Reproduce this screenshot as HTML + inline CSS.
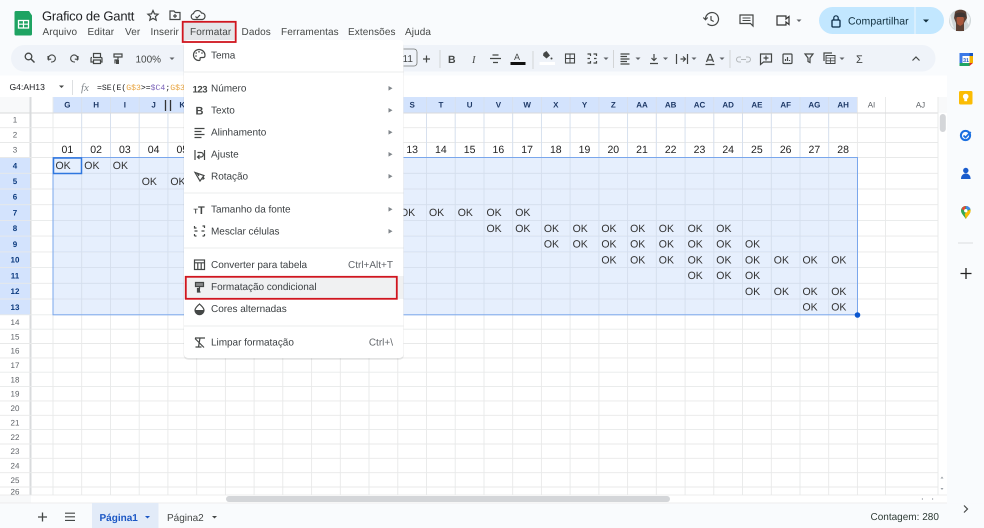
<!DOCTYPE html>
<html lang="pt"><head><meta charset="utf-8"><title>Grafico de Gantt</title>
<style>
html,body{margin:0;padding:0;width:984px;height:528px;overflow:hidden;background:#f9fbfd}
svg{display:block;font-family:"Liberation Sans",Arial,sans-serif;text-rendering:geometricPrecision}
.m{font-size:10px;fill:#3c4043;letter-spacing:-.03px}
.sc{font-size:10px;fill:#5f6368}
.c{font-size:10.5px;fill:#333}
.n{font-size:10.5px;fill:#222;text-anchor:middle}
.r{font-size:8px;fill:#5f6368;text-anchor:middle}
.rs{font-size:8px;fill:#0b3a7e;font-weight:bold;text-anchor:middle}
.h{font-size:8px;fill:#1f3a68;font-weight:bold;text-anchor:middle}
.hu{font-size:8px;fill:#5f6368;text-anchor:middle}
.i{fill:none;stroke:#444746;stroke-width:1.2}
.a{fill:#5f6368}
</style></head><body>
<svg width="984" height="528" viewBox="0 0 984 528" xmlns="http://www.w3.org/2000/svg">
<rect width="984" height="528" fill="#f9fbfd"/>

<!-- Logo -->
<path d="M16 11h13l3 4.500V34a1.500 1.500 0 0 1-1.500 1.500H16A1.500 1.500 0 0 1 14.500 34V12.500A1.500 1.500 0 0 1 16 11z" fill="#1ea362"/>
<rect x="18.500" y="20.500" width="10" height="7.500" fill="none" stroke="#fff" stroke-width="1.300"/>
<path d="M18.500 24.200h10M23.500 20.500v7.500" stroke="#fff" stroke-width="1.200"/>

<!-- Title -->
<text x="42" y="20.500" font-size="13" fill="#202124" letter-spacing="-.2">Grafico de Gantt</text>
<path d="M153 10.500l1.500 3.400 3.600.3-2.700 2.400.8 3.600-3.200-1.900-3.200 1.900.8-3.600-2.700-2.400 3.600-.3z" class="i" stroke-width="1.100"/>
<path d="M170 11h4l1.300 1.500h4.700v7h-10z" class="i"/><path d="M175 14v4M173 16h4" class="i" stroke-width=".9"/>
<path d="M194 19.500a3 3 0 0 1-.5-5.900 4.300 4.300 0 0 1 8-.6 3.300 3.300 0 0 1 1 6.500z" class="i"/><path d="M195.500 16.500l1.500 1.500 3-3" class="i" stroke-width=".9"/>

<!-- Menubar -->
<g font-size="10" fill="#444746" letter-spacing=".1">
<text x="42.500" y="35">Arquivo</text>
<text x="87.500" y="35">Editar</text>
<text x="125" y="35">Ver</text>
<text x="150.500" y="35">Inserir</text>
<rect x="183" y="22" width="52.500" height="20" fill="#e4e6e9"/>
<text x="190" y="35">Formatar</text>
<text x="241.500" y="35">Dados</text>
<text x="281" y="35">Ferramentas</text>
<text x="348" y="35">Extensões</text>
<text x="405" y="35">Ajuda</text>
</g>

<!-- Top-right controls -->
<g class="i" stroke-width="1.400">
<g transform="translate(3.500 0)"><path d="M702 19a6.500 6.500 0 1 1 2 4.700"/><path d="M699.800 17.500l2.200 2.300 2.200-2.300" stroke-width="1.200"/><path d="M707.500 16v4l2.700 1.500" stroke-width="1.200"/></g>
<g transform="translate(6 0)"><path d="M734 15h13v11l-2.500-2.500H734z"/><path d="M736.500 18h8M736.500 20.500h8" stroke-width="1"/></g>
<path d="M777 16h9v3l3-2.500v8l-3-2.500v3h-9z" stroke="#333"/>
</g>
<path d="M796.500 19.500h5l-2.500 2.500z" class="a"/>
<rect x="819" y="7" width="125" height="27" rx="13.500" fill="#c2e7ff"/>
<path d="M915 7v27" stroke="#f9fbfd" stroke-width=".8"/>
<rect x="832" y="20" width="8" height="7" rx="1" fill="none" stroke="#0a2b46" stroke-width="1.300"/>
<path d="M833.800 20v-2a2.200 2.200 0 0 1 4.400 0v2" fill="none" stroke="#0a2b46" stroke-width="1.200"/>
<text x="848" y="24.300" font-size="10.500" fill="#12303f" letter-spacing=".05">Compartilhar</text>
<path d="M923 19.500h6l-3 3z" fill="#12303f"/>

<!-- Avatar -->
<g transform="translate(-6 0)">
<circle cx="966" cy="20.500" r="11" fill="#cfd6d8"/>
<path d="M961 12c2-3 9-3 11 0l1 6-3 5v8h-8v-8l-2-5z" fill="#5b4034"/>
<path d="M962.500 19c.5-4 7-4 7.500 0l-.8 5-3 2-3-2z" fill="#a8573c"/>
<path d="M961 14c3-2 8-2 10.500 0l.5 3-11 0z" fill="#3f3532"/>
<path d="M956 15c1.500 3 2 9 4 13l-2-1c-2-3-3-8-2-12zM973 13l3 5-1 7-2-3z" fill="#f0f2f2"/>
</g>

<!-- Toolbar pill -->
<rect x="11" y="45" width="924.500" height="26.500" rx="13.250" fill="#eff3f9"/>
<g class="i">
<circle cx="28.500" cy="56.500" r="3.300" stroke-width="1.300"/><path d="M31 59l3.500 3.500" stroke-width="1.400"/>
<path d="M49 60.500a3.500 3.500 0 1 1 3 1.500h-1M48 56v3.200h3.200" stroke-width="1.100"/>
<path d="M77 60.500a3.500 3.500 0 1 0-3 1.500h1M78 56v3.200h-3.200" stroke-width="1.100"/>
<path d="M93 57.500h8a1 1 0 0 1 1 1v3.500h-2M93 62h-2v-3.500a1 1 0 0 1 1-1M93.500 57v-3.500h7V57M93.500 60h7v3.500h-7z" stroke-width="1.200"/>
<path d="M114 54h8v3h-8zM118 57.500v2.500h-3v3.500" stroke-width="1.200"/>
<rect x="116" y="60" width="3" height="4" fill="#444746" stroke="none"/>
</g>
<text x="135.500" y="62.500" font-size="10" fill="#444746">100%</text>
<path d="M169.500 57.500h5l-2.500 2.500z" class="a"/>

<!-- right side of toolbar -->
<rect x="392" y="49" width="25" height="17" rx="3" fill="none" stroke="#747775" stroke-width=".8"/>
<text x="402.500" y="62" font-size="10" fill="#444746">11</text>
<path d="M423 59h7M426.500 55.500v7" class="i" stroke-width="1.100"/>
<path d="M440 50v18" stroke="#c7c7c7" stroke-width=".7"/>
<text x="448" y="63" font-size="10.500" font-weight="bold" fill="#444746">B</text>
<text x="472" y="63" font-size="10.500" font-style="italic" fill="#444746" font-family="Liberation Serif">I</text>
<path d="M490 58.500h11M492.500 55h6M493 62.500h5" class="i" stroke-width="1"/>
<text x="514" y="60" font-size="9" fill="#444746">A</text>
<rect x="510.500" y="62" width="15" height="3" fill="#111"/>
<path d="M533 51v18" stroke="#c7c7c7" stroke-width=".7"/>
<g transform="translate(2.500 0)"><path d="M541 53l3-2 3.500 4.500-3.500 3-3.500-3z" fill="#444746"/><circle cx="549" cy="58.500" r="1" fill="#444746"/>
<rect x="537" y="62" width="15.500" height="3" fill="#fff"/></g>
<g transform="translate(3 0)"><rect x="562.500" y="54" width="9" height="9" fill="none" stroke="#444746" stroke-width="1.100"/><path d="M562.500 58.500h9M567 54v9" stroke="#444746" stroke-width="1"/></g>
<g transform="translate(3.500 0)"><path d="M584 54h3v2M590 54h3v2M584 63h3v-2M590 63h3v-2M584 58.500h2.500M590.500 58.500h2.500" class="i" stroke-width="1.100"/></g>
<path d="M603.500 57.500h5l-2.500 2.500z" class="a"/>
<path d="M613.500 50v18" stroke="#c7c7c7" stroke-width=".7"/>
<path d="M620.500 54h9M620.500 56.500h6.500M620.500 59h9M620.500 61.500h6.500M620.500 64h9" class="i" stroke-width="1"/>
<path d="M635.500 57.500h5l-2.500 2.500z" class="a"/>
<g transform="translate(5 0)"><path d="M649 54v6M646.500 58l2.500 2.500 2.500-2.500M645 63.500h8" class="i" stroke-width="1.100"/></g>
<path d="M663 57.500h5l-2.500 2.500z" class="a"/>
<g transform="translate(3.500 0)"><path d="M673 54v10M677 59h5M679.500 56.500l2.500 2.500-2.500 2.500M684 54v10" class="i" stroke-width="1"/></g>
<path d="M691.500 57.500h5l-2.500 2.500z" class="a"/>
<g transform="translate(6 0)"><path d="M700.500 62l3-7.500h1l3 7.500M701.500 60h5M699.500 64.500h9" class="i" stroke-width="1"/></g>
<path d="M719.500 57.500h5l-2.500 2.500z" class="a"/>
<path d="M730 50v18" stroke="#c7c7c7" stroke-width=".7"/>
<g transform="translate(4 0)"><path d="M737 57h-2a2.500 2.500 0 0 0 0 5h2M742 57h2a2.500 2.500 0 0 1 0 5h-2M737 59.500h5" fill="none" stroke="#b4b8bb" stroke-width="1"/></g>
<g transform="translate(6.500 0)"><path d="M754 54h11v8h-8l-3 2.500z" class="i" stroke-width="1.200"/><path d="M759.500 55.500v5M757 58h5" class="i" stroke-width="1"/></g>
<g transform="translate(7 0)"><rect x="776" y="54" width="9" height="9.500" rx="1" class="i" stroke-width="1.100"/><path d="M778.500 61v-2M780.500 61v-4M782.500 61v-1" class="i" stroke-width="1"/></g>
<g transform="translate(7 0)"><path d="M798 54h8l-3 4v4.500l-2-1V58z" class="i" stroke-width="1.100"/></g>
<g transform="translate(9 0)"><rect x="817" y="55.500" width="9" height="8" fill="none" stroke="#444746" stroke-width="1"/><path d="M817 58h9M817 60.800h9M821.500 58v5.500" stroke="#444746" stroke-width=".8"/><path d="M815 61v-8h8" class="i" stroke-width="1"/></g>
<path d="M839.500 57.500h5l-2.500 2.500z" class="a"/>
<text x="856" y="63" font-size="11" fill="#444746">Σ</text>
<path d="M912.500 60.500l3.500-3.500 3.500 3.500" class="i" stroke-width="1.100"/>

<!-- Formula bar -->
<rect x="0" y="75.500" width="947" height="21.500" fill="#fff"/>
<text x="9.500" y="90" font-size="8.600" fill="#202124">G4:AH13</text>
<path d="M59 85.500h5l-2.500 2.500z" fill="#444746"/>
<path d="M72.500 80v15" stroke="#d5d7da" stroke-width=".8"/>
<text x="81" y="91" font-size="11" font-style="italic" fill="#80868b" font-family="Liberation Serif">fx</text>
<text x="97" y="90" font-size="8.150" font-family="Liberation Mono" fill="#202124">=SE(E(<tspan fill="#e8a33d">G$3</tspan>&gt;=<tspan fill="#7a62b8">$C4</tspan>;<tspan fill="#e8a33d">G$3</tspan></text>

<!-- Sheet area -->
<rect x="0" y="97" width="947" height="398" fill="#fff"/>
<rect x="0" y="97" width="30" height="16" fill="#f8f9fa"/>
<rect x="938" y="97" width="9" height="16" fill="#f8f9fa"/>
<rect x="29.500" y="97" width="2" height="398" fill="#d9dbdd"/>
<rect x="53" y="97" width="804.500" height="16" fill="#d3e3fd"/>
<rect x="0" y="157.500" width="30" height="157.300" fill="#d3e3fd"/>
<rect x="53" y="157.500" width="804.500" height="157.300" fill="#e6effd"/>

<!-- Grid lines -->
<path fill="none" stroke="#e8e9e9" stroke-width=".9" d="M0 113H938M0 127.700H938M0 142.500H938M0 157.500H938M0 173.300H938M0 189H938M0 204.700H938M0 220.400H938M0 236.100H938M0 251.900H938M0 267.600H938M0 283.300H938M0 299H938M0 314.800H938M0 329.200H938M0 343.500H938M0 357.900H938M0 372.200H938M0 386.600H938M0 400.900H938M0 415.300H938M0 429.600H938M0 444H938M0 458.300H938M0 472.700H938M0 487H938"/>
<path fill="none" stroke="#e8e9e9" stroke-width=".9" d="M53 97V495M81.700 97V495M110.500 97V495M139.200 97V495M167.900 97V495M196.700 97V495M225.400 97V495M254.100 97V495M282.800 97V495M311.600 97V495M340.300 97V495M369 97V495M397.800 97V495M426.500 97V495M455.200 97V495M484 97V495M512.700 97V495M541.400 97V495M570.100 97V495M598.900 97V495M627.600 97V495M656.300 97V495M685.100 97V495M713.800 97V495M742.500 97V495M771.300 97V495M800 97V495M828.700 97V495M857.400 97V495M885.500 97V495"/>
<path fill="none" stroke="#d3deef" stroke-width=".8" d="M53 173.300H857M53 189H857M53 204.700H857M53 220.400H857M53 236.100H857M53 251.900H857M53 267.600H857M53 283.300H857M53 299H857M81.700 97V315M110.500 97V315M139.200 97V315M167.900 97V315M196.700 97V315M225.400 97V315M254.100 97V315M282.800 97V315M311.600 97V315M340.300 97V315M369 97V315M397.800 97V315M426.500 97V315M455.200 97V315M484 97V315M512.700 97V315M541.400 97V315M570.100 97V315M598.900 97V315M627.600 97V315M656.300 97V315M685.100 97V315M713.800 97V315M742.500 97V315M771.300 97V315M800 97V315M828.700 97V315"/>
<path d="M0 113H938" stroke="#d8dadb" stroke-width="1.100"/>
<path d="M938 97V495" stroke="#e8e9e9" stroke-width=".9"/>
<rect x="939.800" y="114" width="6" height="18" rx="3" fill="#d4d6d9"/>

<!-- Column headers -->
<text class="h" x="67.400" y="107.500">G</text><text class="h" x="96.100" y="107.500">H</text><text class="h" x="124.900" y="107.500">I</text><text class="h" x="153.600" y="107.500">J</text><text class="h" x="182.300" y="107.500">K</text>
<path d="M165.500 100v11M170.500 100v11" stroke="#333" stroke-width="1.300"/>
<text class="h" x="412.200" y="107.500">S</text><text class="h" x="440.900" y="107.500">T</text><text class="h" x="469.600" y="107.500">U</text><text class="h" x="498.400" y="107.500">V</text><text class="h" x="527.100" y="107.500">W</text><text class="h" x="555.800" y="107.500">X</text><text class="h" x="584.500" y="107.500">Y</text><text class="h" x="613.300" y="107.500">Z</text><text class="h" x="642" y="107.500">AA</text><text class="h" x="670.700" y="107.500">AB</text><text class="h" x="699.500" y="107.500">AC</text><text class="h" x="728.200" y="107.500">AD</text><text class="h" x="756.900" y="107.500">AE</text><text class="h" x="785.700" y="107.500">AF</text><text class="h" x="814.400" y="107.500">AG</text><text class="h" x="843.100" y="107.500">AH</text>
<text class="hu" x="871.500" y="107.500">AI</text><text class="hu" x="920.500" y="107.500">AJ</text>

<!-- Row headers -->
<text class="r" x="15" y="122.500">1</text><text class="r" x="15" y="137.500">2</text><text class="r" x="15" y="152.500">3</text>
<text class="rs" x="15" y="168.300">4</text><text class="rs" x="15" y="184">5</text><text class="rs" x="15" y="199.700">6</text><text class="rs" x="15" y="215.400">7</text><text class="rs" x="15" y="231.100">8</text><text class="rs" x="15" y="246.900">9</text><text class="rs" x="15" y="262.600">10</text><text class="rs" x="15" y="278.300">11</text><text class="rs" x="15" y="294">12</text><text class="rs" x="15" y="309.800">13</text>
<text class="r" x="15" y="325">14</text><text class="r" x="15" y="339.300">15</text><text class="r" x="15" y="353.700">16</text><text class="r" x="15" y="368">17</text><text class="r" x="15" y="382.400">18</text><text class="r" x="15" y="396.700">19</text><text class="r" x="15" y="411.100">20</text><text class="r" x="15" y="425.400">21</text><text class="r" x="15" y="439.800">22</text><text class="r" x="15" y="454.100">23</text><text class="r" x="15" y="468.500">24</text><text class="r" x="15" y="482.800">25</text><text class="r" x="15" y="494.500">26</text>

<!-- Row 3 numbers -->
<text class="n" x="67.400" y="153">01</text><text class="n" x="96.100" y="153">02</text><text class="n" x="124.900" y="153">03</text><text class="n" x="153.600" y="153">04</text><text class="n" x="182.300" y="153">05</text><text class="n" x="412.200" y="153">13</text><text class="n" x="440.900" y="153">14</text><text class="n" x="469.600" y="153">15</text><text class="n" x="498.400" y="153">16</text><text class="n" x="527.100" y="153">17</text><text class="n" x="555.800" y="153">18</text><text class="n" x="584.500" y="153">19</text><text class="n" x="613.300" y="153">20</text><text class="n" x="642" y="153">21</text><text class="n" x="670.700" y="153">22</text><text class="n" x="699.500" y="153">23</text><text class="n" x="728.200" y="153">24</text><text class="n" x="756.900" y="153">25</text><text class="n" x="785.700" y="153">26</text><text class="n" x="814.400" y="153">27</text><text class="n" x="843.100" y="153">28</text>

<!-- OK cells -->
<text class="c" x="55.500" y="169">OK</text><text class="c" x="84.300" y="169">OK</text><text class="c" x="112.800" y="169">OK</text>
<text class="c" x="141.700" y="185">OK</text><text class="c" x="170.400" y="185">OK</text>
<text class="c" x="400" y="216">OK</text><text class="c" x="429" y="216">OK</text><text class="c" x="457.700" y="216">OK</text><text class="c" x="486.500" y="216">OK</text><text class="c" x="515.200" y="216">OK</text>
<text class="c" x="486.500" y="232">OK</text><text class="c" x="515.200" y="232">OK</text><text class="c" x="543.900" y="232">OK</text><text class="c" x="572.600" y="232">OK</text><text class="c" x="601.400" y="232">OK</text><text class="c" x="630.100" y="232">OK</text><text class="c" x="658.800" y="232">OK</text><text class="c" x="687.600" y="232">OK</text><text class="c" x="716.300" y="232">OK</text>
<text class="c" x="543.900" y="247.500">OK</text><text class="c" x="572.600" y="247.500">OK</text><text class="c" x="601.400" y="247.500">OK</text><text class="c" x="630.100" y="247.500">OK</text><text class="c" x="658.800" y="247.500">OK</text><text class="c" x="687.600" y="247.500">OK</text><text class="c" x="716.300" y="247.500">OK</text><text class="c" x="745" y="247.500">OK</text>
<text class="c" x="601.400" y="263.300">OK</text><text class="c" x="630.100" y="263.300">OK</text><text class="c" x="658.800" y="263.300">OK</text><text class="c" x="687.600" y="263.300">OK</text><text class="c" x="716.300" y="263.300">OK</text><text class="c" x="745" y="263.300">OK</text><text class="c" x="773.800" y="263.300">OK</text><text class="c" x="802.500" y="263.300">OK</text><text class="c" x="831.200" y="263.300">OK</text>
<text class="c" x="687.600" y="279">OK</text><text class="c" x="716.300" y="279">OK</text><text class="c" x="745" y="279">OK</text>
<text class="c" x="745" y="295">OK</text><text class="c" x="773.800" y="295">OK</text><text class="c" x="802.500" y="295">OK</text><text class="c" x="831.200" y="295">OK</text>
<text class="c" x="802.500" y="310.500">OK</text><text class="c" x="831.200" y="310.500">OK</text>

<!-- Selection borders -->
<rect x="53" y="157.500" width="804.500" height="157.300" fill="none" stroke="#7aa7ec" stroke-width="1"/>
<rect x="53.500" y="158" width="28" height="15.500" fill="none" stroke="#2f77df" stroke-width="1.500"/>
<circle cx="857.500" cy="315" r="2.800" fill="#0b57d0"/>

<!-- Scroll strip -->
<rect x="0" y="495" width="947" height="8" fill="#fff"/>
<rect x="0" y="495" width="31" height="8" fill="#f8f9fa"/>
<path d="M0 495H947M0 503H947" stroke="#e6e7e8" stroke-width=".8"/>
<rect x="226" y="496" width="444" height="6" rx="3" fill="#d4d6d9"/>
<path d="M940.500 478.500l1.500-2 1.500 2zM940.500 488l1.500 2 1.500-2z" fill="#9aa0a6"/>
<path d="M923 498l-1.500 1 1.500 1zM932 498l1.500 1-1.500 1z" fill="#9aa0a6"/>

<!-- Tab bar -->
<rect x="0" y="503.400" width="984" height="24.600" fill="#f9fbfd"/>
<path d="M38 517h9M42.500 512.500v9" stroke="#444746" stroke-width="1.300"/>
<path d="M65 513.200h10M65 516.800h10M65 520.400h10" stroke="#444746" stroke-width="1.100"/>
<rect x="92" y="503" width="66.500" height="25" fill="#e2ebf8"/>
<text x="99.500" y="520.800" font-size="10" font-weight="bold" fill="#1a56c4">Página1</text>
<path d="M145 516h5l-2.500 2.500z" fill="#1a56c4"/>
<text x="167" y="520.800" font-size="10" fill="#444746">Página2</text>
<path d="M212 516h5l-2.500 2.500z" fill="#444746"/>
<text x="870.500" y="520" font-size="10" fill="#2d3a34">Contagem: 280</text>
<path d="M964 505.500l3.500 3.500-3.500 3.500" class="i" stroke-width="1.100"/>

<!-- Side panel icons -->
<rect x="959.500" y="53" width="13" height="13" fill="#fff"/>
<path d="M959.500 53h10v3h-7v7h-3z" fill="#3a78e7"/><path d="M969.500 53h3.500v3h-3.500z" fill="#1a56c4"/><path d="M969.500 56h3.500v7h-3.500z" fill="#f4b400"/><path d="M959.500 63h10v3h-10z" fill="#1fa463"/><path d="M969.500 63h3.500l-3.500 3z" fill="#d93025"/>
<text x="966" y="62" font-size="5.500" font-weight="bold" fill="#1a56c4" text-anchor="middle">31</text>
<rect x="959" y="91" width="13.500" height="13.500" rx="1.500" fill="#fbbc04"/>
<circle cx="965.700" cy="96.500" r="2.800" fill="#fff"/><rect x="964.300" y="99" width="2.800" height="2.200" fill="#fff"/>
<circle cx="965.500" cy="135.500" r="4.600" fill="none" stroke="#1a6fe0" stroke-width="2"/><path d="M963.500 135.500l2 2 5.200-5.500" fill="none" stroke="#1a6fe0" stroke-width="1.800"/>
<circle cx="965.800" cy="170.500" r="2.700" fill="#1a5ccd"/><path d="M961 179c0-3.500 2-5.500 4.800-5.500s4.800 2 4.800 5.500z" fill="#1a5ccd"/>
<path d="M965.800 206c-3 0-4.800 2.200-4.800 4.600 0 3 3 5.200 4.800 8.400 1.800-3.200 4.800-5.400 4.800-8.400 0-2.400-1.800-4.600-4.800-4.600z" fill="#34a853"/>
<path d="M961.600 209l3 1.800 1.200-4.800c-2.200 0-3.400 1.500-4.200 3z" fill="#ea4335"/><path d="M966 206l.5 4 4-.8c-.6-1.700-2.300-3.200-4.500-3.200z" fill="#4285f4"/>
<path d="M970.600 209.500l-3.200 1.500-2.700 3 1.100 5c1.800-3.200 4.800-5.400 4.800-8.400z" fill="#fbbc04"/><circle cx="965.800" cy="210.700" r="1.700" fill="#fff"/>
<path d="M958 243h15" stroke="#dadce0" stroke-width="1"/>
<path d="M960.500 273.500h11M966 268v11" stroke="#222" stroke-width="1.300"/>

<!-- Format menu -->
<rect x="183.500" y="41" width="220.500" height="319" rx="5" fill="#000" opacity=".08"/>
<rect x="184" y="40" width="219.500" height="318" rx="4" fill="#fff"/>
<path d="M184 72H403.500M184 193H403.500M184 248H403.500M184 326H403.500" stroke="#ebeced" stroke-width="1"/>
<rect x="184" y="276" width="219.500" height="23" fill="#f0f1f2"/>

<text class="m" x="211" y="58.500">Tema</text>
<text class="m" x="211" y="91.700">Número</text>
<text class="m" x="211" y="113.700">Texto</text>
<text class="m" x="211" y="135.700">Alinhamento</text>
<text class="m" x="211" y="157.500">Ajuste</text>
<text class="m" x="211" y="179.500">Rotação</text>
<text class="m" x="211" y="212.700">Tamanho da fonte</text>
<text class="m" x="211" y="234.700">Mesclar células</text>
<text class="m" x="211" y="268">Converter para tabela</text>
<text class="m" x="211" y="290">Formatação condicional</text>
<text class="m" x="211" y="312">Cores alternadas</text>
<text class="m" x="211" y="345.500">Limpar formatação</text>
<text class="sc" x="393" y="268" text-anchor="end">Ctrl+Alt+T</text>
<text class="sc" x="393" y="345.500" text-anchor="end">Ctrl+\</text>

<path d="M388.500 86l4 2.300-4 2.300zM388.500 108l4 2.300-4 2.300zM388.500 130l4 2.300-4 2.300zM388.500 152l4 2.300-4 2.300zM388.500 174l4 2.300-4 2.300zM388.500 207l4 2.300-4 2.300zM388.500 229l4 2.300-4 2.300z" fill="#80868b"/>

<!-- Menu icons -->
<path d="M199 49.500a5.500 5.500 0 1 0 0 11c1.500 0 1-1.500 1-2s.5-1 1.500-1h2c1 0 1.500-.7 1.500-2.500 0-3-2.800-5.500-6-5.500z" class="i" stroke-width="1.100"/>
<g fill="#444746"><circle cx="196.200" cy="53" r=".8"/><circle cx="199" cy="51.800" r=".8"/><circle cx="202" cy="53" r=".8"/><circle cx="196" cy="56" r=".8"/></g>
<text x="192.500" y="92.500" font-size="9.500" font-weight="bold" fill="#444746" letter-spacing="-.4">123</text>
<text x="195.500" y="114.500" font-size="11" font-weight="bold" fill="#444746">B</text>
<path d="M194.500 128.500h10M194.500 131.500h7M194.500 134.500h10M194.500 137.500h7" class="i" stroke-width="1"/>
<path d="M195 150v10M204.500 150v10M197.500 152.500h3.500a2 2 0 0 1 0 4.500h-3M199.500 155l-2 2 2 2" class="i" stroke-width="1"/>
<path d="M195 172.500l9 3-4 5.500zM203 177l1 1.500-1.500 1M197 173l2 3" class="i" stroke-width="1"/>
<text x="193.500" y="213.500" font-size="7" font-weight="bold" fill="#444746">T</text>
<text x="198" y="214" font-size="11" font-weight="bold" fill="#444746">T</text>
<path d="M194.500 226v2h2M202.500 226h2v2M194.500 236v-2M204.500 236v-2M194.500 236h2M202.500 236h2M194.500 231h3M201.500 231h3" class="i" stroke-width="1"/>
<rect x="194.500" y="260" width="10" height="9.500" class="i" stroke-width="1.100"/><path d="M194.500 262.800h10M197.800 262.800v6.700M201.200 262.800v6.700" class="i" stroke-width="1"/>
<path d="M195.500 282.500h8v4h-8zM199.500 286.500v2h-2v3.500h3" class="i" stroke-width="1.200"/><rect x="197" y="288.500" width="3" height="3.500" fill="#444746"/><path d="M195.500 282.500h8v4h-8z" fill="#444746" opacity=".6"/>
<path d="M199.500 304c2 2 4.500 3.800 4.500 6.200a4.500 4.500 0 0 1-9 0c0-2.400 2.500-4.200 4.500-6.200z" class="i" stroke-width="1.100"/><path d="M195 310h9c0 3-2 4.700-4.500 4.700S195 313 195 310z" fill="#444746"/>
<path d="M195 338h10M200 338l-1.500 9M195 338.500l9 9M195.500 347h6" class="i" stroke-width="1"/>

<!-- Red highlight boxes -->
<rect x="182.700" y="21.800" width="53" height="20.200" fill="none" stroke="#d0161f" stroke-width="1.800"/>
<rect x="185.800" y="276.800" width="211" height="22" fill="none" stroke="#d0161f" stroke-width="1.800"/>
</svg>
</body></html>
